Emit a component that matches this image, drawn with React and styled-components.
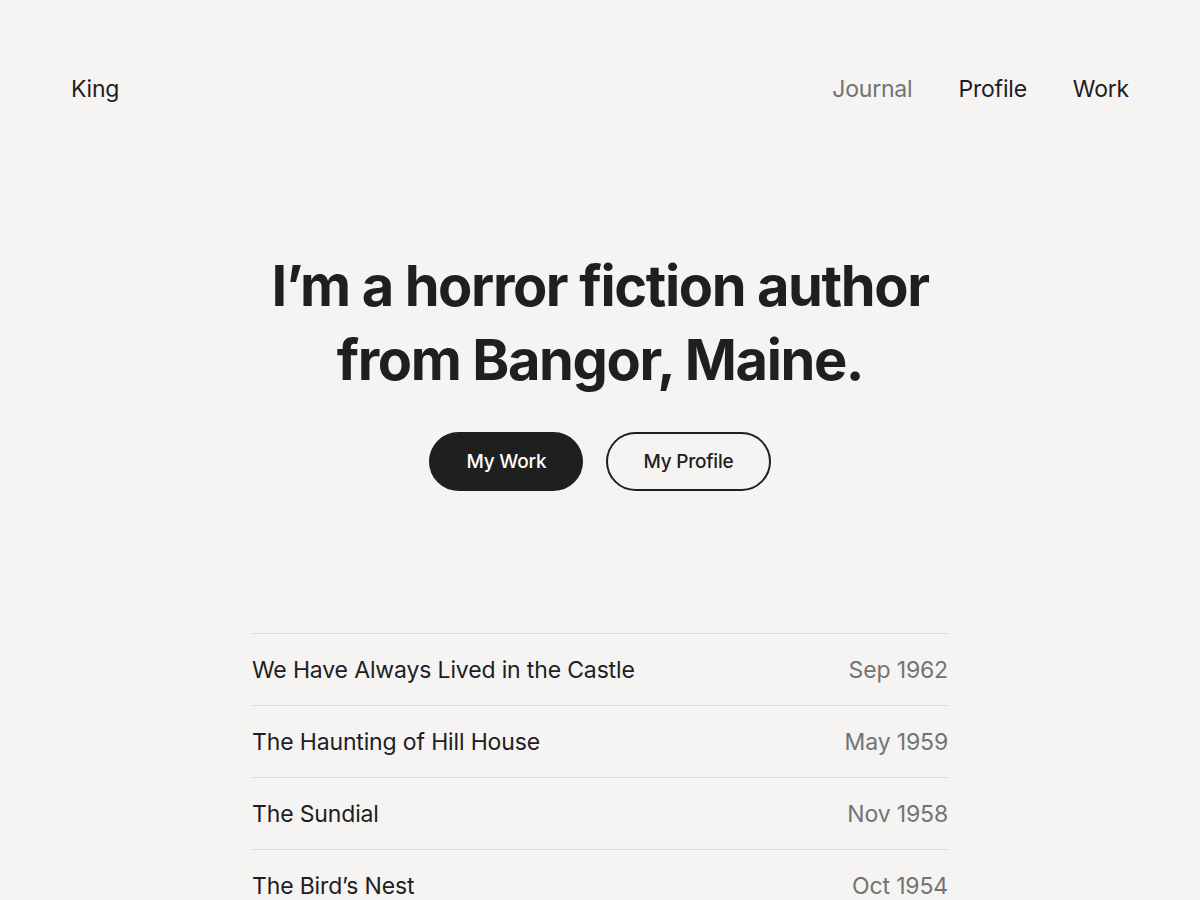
import React from 'react';
import styled, { createGlobalStyle } from 'styled-components';

const GlobalStyle = createGlobalStyle`
    html, body {
        margin: 0;
        padding: 0;
        background: #f5f4f2;
        color: #1e201f;
        font-family: Inter, "Noto Sans", sans-serif;
    }
`;

const Page = styled.div`
    min-height: 900px;
    display: flex;
    flex-direction: column;
`;

// Top bar with name and links
const Header = styled.header`
    display: flex;
    align-items: center;
    justify-content: space-between;
    padding: 74px 71px 0 71px;
    height: 30px;
`;

const Brand = styled.a`
    font-size: 23px;
    letter-spacing: -0.2px;
    color: #1e201f;
    text-decoration: none;
`;

const Nav = styled.nav`
    display: flex;
    gap: 46px;
`;

const NavLink = styled.a`
    font-size: 23px;
    letter-spacing: -0.2px;
    text-decoration: none;
    color: ${props => (props.$muted ? '#737373' : '#1e201f')};
`;

// Hero block
const Hero = styled.section`
    display: flex;
    flex-direction: column;
    align-items: center;
    padding-top: 145px;
`;

const Title = styled.h1`
    margin: 0;
    font-size: 56px;
    line-height: 74px;
    font-weight: 700;
    letter-spacing: -1.4px;
    text-align: center;
`;

const Actions = styled.div`
    display: flex;
    gap: 23px;
    margin-top: 35px;
`;

const Button = styled.a`
    display: flex;
    align-items: center;
    justify-content: center;
    box-sizing: border-box;
    height: 59px;
    padding: 0 35px;
    border-radius: 30px;
    font-size: 19px;
    font-weight: 500;
    letter-spacing: -0.2px;
    text-decoration: none;
    border: 2px solid #1e201f;
    background: ${props => (props.$primary ? '#1e201f' : 'transparent')};
    color: ${props => (props.$primary ? '#ffffff' : '#1e201f')};
`;

// Works list
const List = styled.ul`
    list-style: none;
    margin: 142px auto 0;
    padding: 0;
    width: 696px;
    border-top: 1px solid #dcdbd9;
`;

const Row = styled.li`
    display: flex;
    align-items: center;
    justify-content: space-between;
    height: 71px;
    border-bottom: 1px solid #dcdbd9;
    font-size: 23px;
    letter-spacing: -0.15px;
`;

const Date = styled.span`
    color: #737373;
`;

const works = [
    { title: 'We Have Always Lived in the Castle', date: 'Sep 1962' },
    { title: 'The Haunting of Hill House', date: 'May 1959' },
    { title: 'The Sundial', date: 'Nov 1958' },
    { title: 'The Bird’s Nest', date: 'Oct 1954' },
];

export default function App() {
    return (
        <Page>
            <GlobalStyle />
            <Header>
                <Brand href="#">King</Brand>
                <Nav>
                    <NavLink href="#" $muted>Journal</NavLink>
                    <NavLink href="#">Profile</NavLink>
                    <NavLink href="#">Work</NavLink>
                </Nav>
            </Header>
            <Hero>
                <Title>
                    I’m a horror fiction author
                    <br />
                    from Bangor, Maine.
                </Title>
                <Actions>
                    <Button href="#" $primary>My Work</Button>
                    <Button href="#">My Profile</Button>
                </Actions>
            </Hero>
            <List>
                {works.map(work => (
                    <Row key={work.title}>
                        <span>{work.title}</span>
                        <Date>{work.date}</Date>
                    </Row>
                ))}
            </List>
        </Page>
    );
}
